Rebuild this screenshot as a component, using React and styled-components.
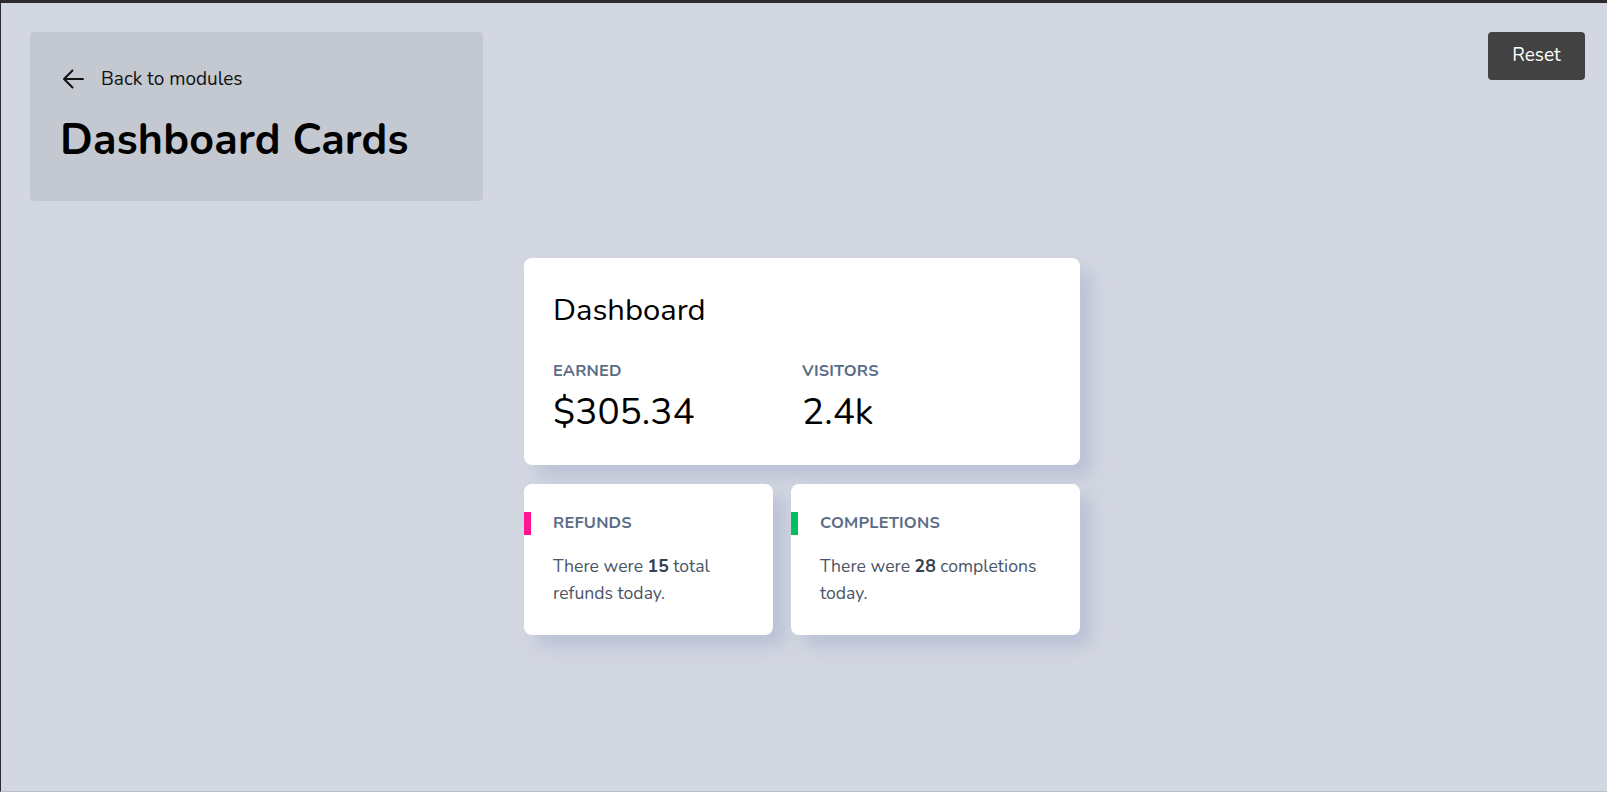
import styled, { createGlobalStyle } from "styled-components";

const GlobalStyle = createGlobalStyle`
  html, body {
    margin: 0;
    padding: 0;
  }
  body {
    font-family: "Nunito", "Lato", "Noto Sans", sans-serif;
    background: #d3d7e1;
    color: #000;
  }
`;

const Page = styled.div`
  box-sizing: border-box;
  height: 792px;
  border-top: 3px solid #2b2b2b;
  border-left: 1px solid #2b2b2b;
  border-bottom: 1px solid #b9bdc6;
  padding: 29px 22px 0 29px;
  display: flex;
  flex-direction: column;
  gap: 57px;
`;

const TopBar = styled.header`
  display: flex;
  justify-content: space-between;
  align-items: flex-start;
`;

const TitlePanel = styled.div`
  box-sizing: border-box;
  width: 453px;
  height: 169px;
  background: #c4c8d1;
  border-radius: 4px;
  padding: 34px 30px 0 32px;
  display: flex;
  flex-direction: column;
  gap: 23px;
  h1 {
    margin: 0 0 0 -2px;
    font-size: 43px;
    font-weight: 700;
    line-height: 1.2;
    letter-spacing: 0.2px;
  }
`;

const BackLink = styled.a`
  display: flex;
  align-items: center;
  gap: 17px;
  font-size: 19px;
  color: #111;
  text-decoration: none;
  cursor: pointer;
`;

const ResetButton = styled.button`
  width: 97px;
  height: 48px;
  padding: 0 0 3px;
  border: none;
  border-radius: 4px;
  background: #424242;
  color: #fff;
  font-family: inherit;
  font-size: 19px;
  cursor: pointer;
`;

const CardGrid = styled.main`
  align-self: center;
  margin-right: 11px;
  display: grid;
  grid-template-columns: 249px 289px;
  gap: 19px 18px;
`;

const Card = styled.section`
  box-sizing: border-box;
  position: relative;
  background: #fff;
  border-radius: 8px;
  box-shadow: 12px 12px 16px rgba(168, 179, 206, 0.55);
  grid-column: ${(p) => (p.$wide ? "1 / -1" : "auto")};
  height: ${(p) => (p.$wide ? "207px" : "151px")};
  padding: ${(p) => (p.$wide ? "32px 29px" : "28px 29px")};
`;

const CardTitle = styled.h2`
  margin: 0 0 30px;
  font-size: 31px;
  font-weight: 400;
  line-height: 1.3;
`;

const Stats = styled.div`
  display: flex;
`;

const Stat = styled.div`
  width: 250px;
  display: flex;
  flex-direction: column;
  gap: 7px;
  strong {
    font-size: 37px;
    font-weight: 400;
    line-height: 1.25;
  }
`;

const Label = styled.span`
  display: block;
  font-size: 16.4px;
  font-weight: 700;
  color: #5b6c87;
  line-height: 22px;
  letter-spacing: 0.2px;
`;

const Accent = styled.span`
  position: absolute;
  left: 0;
  top: 28px;
  width: 7px;
  height: 23px;
  background: ${(p) => p.$color};
`;

const Text = styled.p`
  margin: 19px 0 0;
  font-size: 17.6px;
  line-height: 27px;
  color: #4a5466;
  b {
    color: #363f4d;
    font-weight: 700;
  }
`;

function ArrowBack() {
  return (
    <svg width="22" height="20" viewBox="0 0 22 20" fill="none">
      <path
        d="M21 10H2M10.5 1.5L2 10l8.5 8.5"
        stroke="#111"
        strokeWidth="2"
        strokeLinecap="round"
        strokeLinejoin="round"
      />
    </svg>
  );
}

function App() {
  return (
    <>
      <GlobalStyle />
      <Page>
        <TopBar>
          <TitlePanel>
            <BackLink>
              <ArrowBack />
              Back to modules
            </BackLink>
            <h1>Dashboard Cards</h1>
          </TitlePanel>
          <ResetButton>Reset</ResetButton>
        </TopBar>
        <CardGrid>
          <Card $wide>
            <CardTitle>Dashboard</CardTitle>
            <Stats>
              <Stat>
                <Label>EARNED</Label>
                <strong>$305.34</strong>
              </Stat>
              <Stat>
                <Label>VISITORS</Label>
                <strong>2.4k</strong>
              </Stat>
            </Stats>
          </Card>
          <Card>
            <Accent $color="#ff1493" />
            <Label>REFUNDS</Label>
            <Text>
              There were <b>15</b> total refunds today.
            </Text>
          </Card>
          <Card>
            <Accent $color="#00c060" />
            <Label>COMPLETIONS</Label>
            <Text>
              There were <b>28</b> completions today.
            </Text>
          </Card>
        </CardGrid>
      </Page>
    </>
  );
}

export default App;
